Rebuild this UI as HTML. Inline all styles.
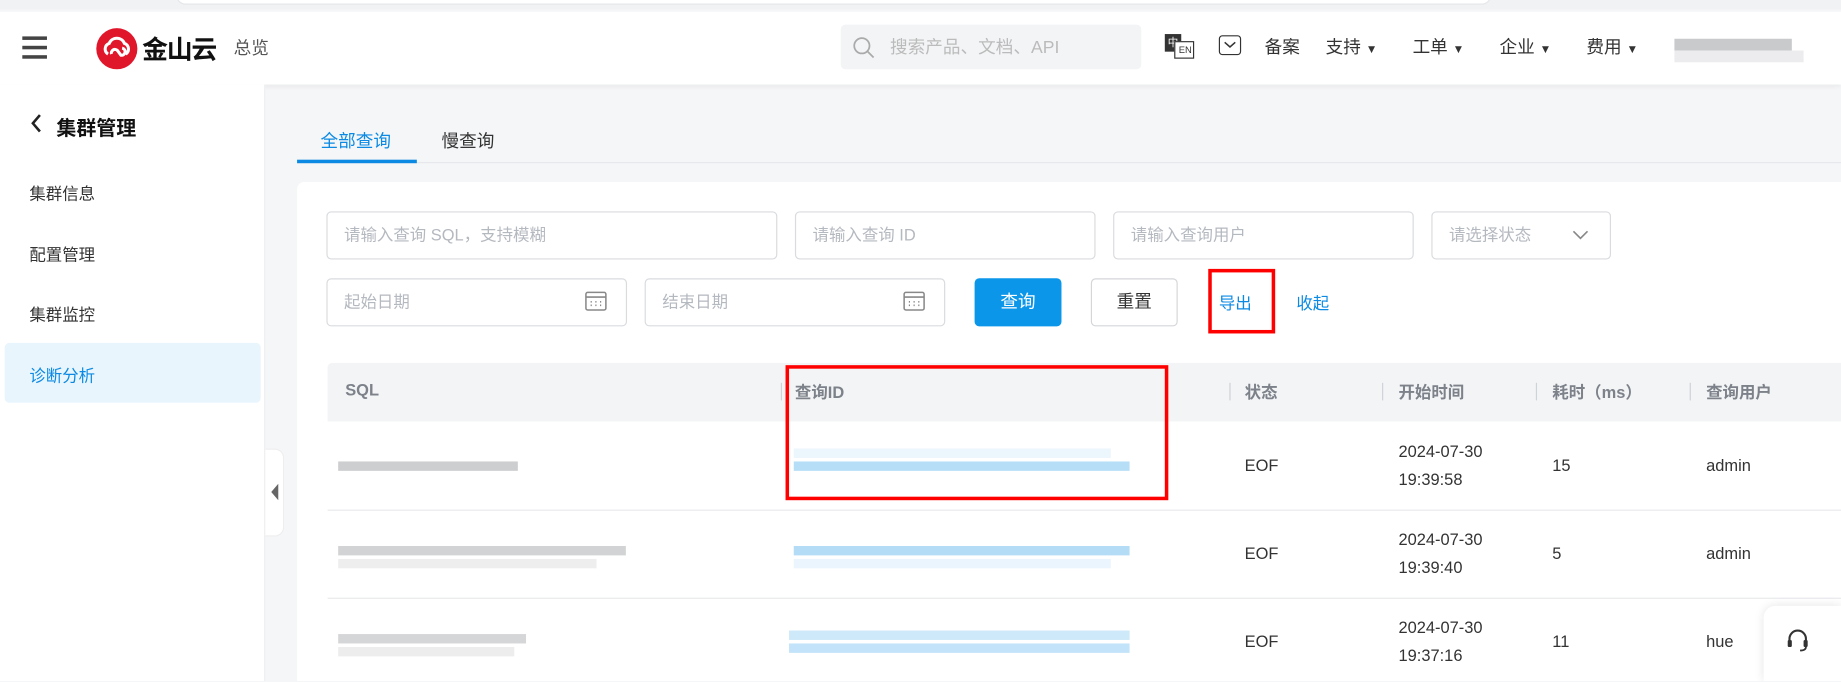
<!DOCTYPE html>
<html><head><meta charset="utf-8"><style>
*{margin:0;padding:0;box-sizing:border-box}
html,body{width:1841px;height:682px;overflow:hidden}
body{background:#f5f6f8;font-family:"Liberation Sans","Noto Sans CJK SC",sans-serif;font-size:14px;color:#333;position:relative}
#w{position:absolute;left:0;top:0;width:1568px;height:580px;transform:scale(1.1742);transform-origin:0 0;overflow:hidden}
.a{position:absolute}
.inp{position:absolute;border:1px solid #d9dbdf;border-radius:4px;background:#fff;color:#b4b8bf;font-size:14px;padding-left:14px;height:41px;line-height:39px}
.th{position:absolute;top:324px;font-weight:bold;color:#7d828a;font-size:14px}
.sep{position:absolute;top:326px;width:1px;height:15px;background:#cfd2d6}
.td{position:absolute;font-size:14px;color:#333}
.blur{position:absolute;height:8px}
</style></head><body><div id="w">
<div class="a" style="left:0;top:0;width:1568px;height:8px;background:#f1f2f4"></div>
<div class="a" style="left:150px;top:-6px;width:1120px;height:10px;background:#fff;border-radius:0 0 8px 8px;border:1px solid #e6e7ea"></div>
<div class="a" style="left:0;top:10px;width:1568px;height:62px;background:#fff;box-shadow:0 2px 4px rgba(0,0,0,.05)"></div>
<div class="a" style="left:19px;top:31px;width:21px;height:2.5px;background:#444;box-shadow:0 8px 0 #444,0 16px 0 #444"></div>
<div class="a" style="left:82px;top:24px;width:35px;height:35px;border-radius:50%;background:#e0162b"></div>
<svg class="a" style="left:86px;top:30px" width="27" height="22" viewBox="0 0 27 22"><path d="M6 16a5 5 0 0 1 1-9 7 7 0 0 1 13 0 5 5 0 0 1 1 9M9 16a3 3 0 0 1 5-3l3 4a3 3 0 1 0 1-6" fill="none" stroke="#fff" stroke-width="2.6"/></svg>
<div class="a" style="left:121px;top:25px;font-size:22px;font-weight:bold;color:#111;letter-spacing:-1px">金山云</div>
<div class="a" style="left:199px;top:30px;font-size:15px;color:#555">总览</div>
<div class="a" style="left:716px;top:21px;width:256px;height:38px;background:#f3f4f6;border-radius:4px"></div>
<svg class="a" style="left:726px;top:31px" width="20" height="20"><circle cx="8" cy="8" r="6.5" fill="none" stroke="#aaa" stroke-width="1.5"/><path d="M13 13l5 5" stroke="#aaa" stroke-width="1.5"/></svg>
<div class="a" style="left:758px;top:29px;font-size:15px;color:#bbb">搜索产品、文档、API</div>
<div class="a" style="left:992px;top:29px;width:14px;height:15px;background:#333;color:#fff;font-size:9px;line-height:15px;text-align:center">中</div>
<div class="a" style="left:1000px;top:35px;width:17px;height:15px;border:1px solid #333;font-size:8px;line-height:13px;text-align:right;background:#fff;padding-right:1px">EN</div>
<div class="a" style="left:1038px;top:30px;width:19px;height:17px;border:1.5px solid #333;border-radius:3px"></div>
<svg class="a" style="left:1042px;top:35px" width="11" height="6"><path d="M1 1l4.5 4 4.5-4" fill="none" stroke="#333" stroke-width="1.3"/></svg>
<div class="a" style="left:1077px;top:29px;font-size:15px">备案</div>
<div class="a" style="left:1129px;top:29px;font-size:15px">支持 <span style="font-size:10px">▼</span></div>
<div class="a" style="left:1203px;top:29px;font-size:15px">工单 <span style="font-size:10px">▼</span></div>
<div class="a" style="left:1277px;top:29px;font-size:15px">企业 <span style="font-size:10px">▼</span></div>
<div class="a" style="left:1351px;top:29px;font-size:15px">费用 <span style="font-size:10px">▼</span></div>
<div class="a" style="left:1426px;top:33px;width:100px;height:10px;background:#c9cacc"></div>
<div class="a" style="left:1426px;top:43px;width:110px;height:10px;background:#ececee"></div>
<div class="a" style="left:0;top:72px;width:226px;height:508px;background:#fff;border-right:1px solid #ebecee"></div>
<svg class="a" style="left:25px;top:96px" width="12" height="18"><path d="M9 2L3 9l6 7" fill="none" stroke="#222" stroke-width="2.2"/></svg>
<div class="a" style="left:48px;top:95px;font-size:17px;font-weight:bold;color:#111">集群管理</div>
<div class="a" style="left:25px;top:155px;font-size:14px">集群信息</div>
<div class="a" style="left:25px;top:207px;font-size:14px">配置管理</div>
<div class="a" style="left:25px;top:258px;font-size:14px">集群监控</div>
<div class="a" style="left:4px;top:292px;width:218px;height:51px;background:#e8f5fd;border-radius:4px"></div>
<div class="a" style="left:25px;top:310px;font-size:14px;color:#0c8ae3">诊断分析</div>
<div class="a" style="left:226px;top:382px;width:16px;height:75px;background:#fff;border-radius:0 8px 8px 0;border:1px solid #eee;border-left:none"></div>
<svg class="a" style="left:231px;top:412px" width="7" height="14"><path d="M6 0v14L0 7z" fill="#666"/></svg>
<div class="a" style="left:253px;top:138px;width:1315px;height:1px;background:#e6e8eb"></div>
<div class="a" style="left:273px;top:109px;font-size:15px;color:#0c8ae3">全部查询</div>
<div class="a" style="left:253px;top:136px;width:102px;height:3px;background:#0c8ae3"></div>
<div class="a" style="left:376px;top:109px;font-size:15px">慢查询</div>
<div class="a" style="left:253px;top:155px;width:1315px;height:425px;background:#fff;border-radius:6px 0 0 0"></div>
<div class="inp" style="left:278px;top:180px;width:384px">请输入查询 SQL，支持模糊</div>
<div class="inp" style="left:677px;top:180px;width:256px">请输入查询 ID</div>
<div class="inp" style="left:948px;top:180px;width:256px">请输入查询用户</div>
<div class="inp" style="left:1219px;top:180px;width:153px">请选择状态</div>
<svg class="a" style="left:1339px;top:196px" width="14" height="9"><path d="M1 1l6 6 6-6" fill="none" stroke="#888" stroke-width="1.4"/></svg>
<div class="inp" style="left:278px;top:237px;width:256px">起始日期</div>
<div class="inp" style="left:549px;top:237px;width:256px">结束日期</div>
<svg class="a" style="left:498px;top:248px" width="19" height="17"><rect x="1" y="1" width="17" height="15" rx="1.5" fill="none" stroke="#888" stroke-width="1.3"/><path d="M1 5h17" stroke="#888" stroke-width="1.3"/><path d="M5 9h1M9 9h1M13 9h1M5 12h1M9 12h1M13 12h1" stroke="#888" stroke-width="1.4"/></svg>
<svg class="a" style="left:769px;top:248px" width="19" height="17"><rect x="1" y="1" width="17" height="15" rx="1.5" fill="none" stroke="#888" stroke-width="1.3"/><path d="M1 5h17" stroke="#888" stroke-width="1.3"/><path d="M5 9h1M9 9h1M13 9h1M5 12h1M9 12h1M13 12h1" stroke="#888" stroke-width="1.4"/></svg>
<div class="a" style="left:830px;top:237px;width:74px;height:41px;background:#0c96ea;border-radius:4px;color:#fff;font-size:15px;line-height:41px;text-align:center">查询</div>
<div class="a" style="left:929px;top:237px;width:74px;height:41px;border:1px solid #d4d6da;border-radius:4px;font-size:15px;line-height:39px;text-align:center">重置</div>
<div class="a" style="left:1029px;top:229px;width:57px;height:55px;border:3px solid #f00"></div>
<div class="a" style="left:1038px;top:248px;font-size:14px;color:#0c8ae3">导出</div>
<div class="a" style="left:1104px;top:248px;font-size:14px;color:#0c8ae3">收起</div>
<div class="a" style="left:279px;top:309px;width:1289px;height:50px;background:#f3f4f6;border-radius:4px 0 0 0"></div>
<div class="th" style="left:294px">SQL</div>
<div class="sep" style="left:665px"></div><div class="th" style="left:677px">查询ID</div>
<div class="sep" style="left:1047px"></div><div class="th" style="left:1060px">状态</div>
<div class="sep" style="left:1177px"></div><div class="th" style="left:1191px">开始时间</div>
<div class="sep" style="left:1308px"></div><div class="th" style="left:1322px">耗时（ms）</div>
<div class="sep" style="left:1439px"></div><div class="th" style="left:1453px">查询用户</div>
<div class="a" style="left:279px;top:434px;width:1289px;height:1px;background:#e8e9ec"></div>
<div class="a" style="left:279px;top:509px;width:1289px;height:1px;background:#e8e9ec"></div>
<div class="blur" style="left:288px;top:393px;width:153px;background:#cdcecf"></div>
<div class="blur" style="left:676px;top:393px;width:286px;background:#b7def7"></div>
<div class="blur" style="left:676px;top:382px;width:270px;background:#ecf6fd"></div>
<div class="blur" style="left:288px;top:465px;width:245px;background:#d2d3d4"></div>
<div class="blur" style="left:288px;top:476px;width:220px;background:#eeeeef"></div>
<div class="blur" style="left:676px;top:465px;width:286px;background:#b5dcf7"></div>
<div class="blur" style="left:676px;top:476px;width:270px;background:#eaf5fd"></div>
<div class="blur" style="left:288px;top:540px;width:160px;background:#d5d6d7"></div>
<div class="blur" style="left:288px;top:551px;width:150px;background:#ededee"></div>
<div class="blur" style="left:672px;top:537px;width:290px;background:#cde9fa"></div>
<div class="blur" style="left:672px;top:548px;width:290px;background:#c2e3f9"></div>
<div class="a" style="left:669px;top:311px;width:326px;height:115px;border:3px solid #f00"></div>
<div class="td" style="left:1060px;top:388px">EOF</div>
<div class="td" style="left:1191px;top:372px;line-height:24px">2024-07-30<br>19:39:58</div>
<div class="td" style="left:1322px;top:388px">15</div>
<div class="td" style="left:1453px;top:388px">admin</div>
<div class="td" style="left:1060px;top:463px">EOF</div>
<div class="td" style="left:1191px;top:447px;line-height:24px">2024-07-30<br>19:39:40</div>
<div class="td" style="left:1322px;top:463px">5</div>
<div class="td" style="left:1453px;top:463px">admin</div>
<div class="td" style="left:1060px;top:538px">EOF</div>
<div class="td" style="left:1191px;top:522px;line-height:24px">2024-07-30<br>19:37:16</div>
<div class="td" style="left:1322px;top:538px">11</div>
<div class="td" style="left:1453px;top:538px">hue</div>
<div class="a" style="left:1502px;top:516px;width:66px;height:64px;background:#fff;border-radius:10px 0 0 0;box-shadow:0 0 8px rgba(0,0,0,.1)"></div>
<svg class="a" style="left:1520px;top:534px" width="22" height="22"><path d="M4 13V10a7 7 0 0 1 14 0v3" fill="none" stroke="#333" stroke-width="1.8"/><rect x="2.5" y="11" width="3.5" height="6" rx="1.2" fill="#333"/><rect x="16" y="11" width="3.5" height="6" rx="1.2" fill="#333"/><path d="M18 17q0 3-5 3" fill="none" stroke="#333" stroke-width="1.5"/></svg>
</div></body></html>
